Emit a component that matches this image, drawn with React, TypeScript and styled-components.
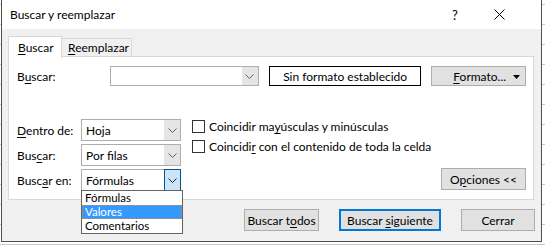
import React from "react";
import styled, { createGlobalStyle, css } from "styled-components";

const FONT = `"Segoe UI", Lato, "Liberation Sans", Arial, sans-serif`;

const GlobalStyle = createGlobalStyle`
  html, body {
    margin: 0;
    padding: 0;
  }
  body {
    width: 545px;
    height: 245px;
    overflow: hidden;
    background-color: #ffffff;
    background-image: linear-gradient(#c8c8c8 1px, transparent 1px);
    background-size: 100% 20px;
    background-position: 0 4px;
    font-family: ${FONT};
    font-size: 12px;
    color: #000;
  }
`;

const Page = styled.div`
  padding-left: 1px;
`;

const Window = styled.div`
  box-sizing: border-box;
  width: 541px;
  height: 242px;
  border: 1px solid #505050;
  border-top: none;
  background: #f0f0f0;
  display: flex;
  flex-direction: column;
`;

const TitleBar = styled.div`
  height: 29px;
  background: #ffffff;
  display: flex;
  align-items: center;
  padding-left: 8px;
  padding-right: 20px;
`;

const Title = styled.div`
  flex: 1;
  font-size: 12px;
  margin-top: -1px;
`;

const CaptionButton = styled.div`
  width: 44px;
  height: 29px;
  display: flex;
  align-items: center;
  justify-content: center;
  font-size: 13px;
`;

const Body = styled.div`
  flex: 1;
  display: flex;
  flex-direction: column;
  padding: 7px 7px 0 6px;
`;

const TabRow = styled.div`
  display: flex;
  align-items: flex-end;
  height: 21px;
  margin-bottom: -1px;
  position: relative;
  z-index: 1;
`;

const Tab = styled.div<{ $active?: boolean }>`
  box-sizing: border-box;
  display: flex;
  align-items: center;
  border: 1px solid #d9d9d9;
  border-bottom: none;
  ${({ $active }) =>
    $active
      ? css`
          width: 54px;
          height: 22px;
          background: #ffffff;
          padding-left: 9px;
          margin-bottom: -1px;
        `
      : css`
          width: 70px;
          height: 19px;
          background: #f0f0f0;
          border-left: none;
          padding: 0 0 1px 6px;
          border-bottom: 1px solid #d9d9d9;
        `}
`;

const Panel = styled.div`
  box-sizing: border-box;
  height: 144px;
  border: 1px solid #d9d9d9;
  background: #ffffff;
  padding: 9px 7px 0 8px;
  display: flex;
  flex-direction: column;
`;

const FindRow = styled.div`
  display: flex;
  align-items: center;
  height: 20px;
`;

const FindLabel = styled.div`
  width: 93px;
`;

const Mn = styled.u`
  text-underline-offset: 2px;
`;

const Combo = styled.div<{ $width: number; $height: number }>`
  position: relative;
  box-sizing: border-box;
  width: ${({ $width }) => $width}px;
  height: ${({ $height }) => $height}px;
  border: 1px solid #adadad;
  background: #ffffff;
  display: flex;
  align-items: center;
  padding-left: 4px;
`;

const ComboText = styled.span`
  flex: 1;
`;

const ComboButton = styled.div<{ $focused?: boolean }>`
  box-sizing: border-box;
  align-self: stretch;
  width: 16px;
  display: flex;
  align-items: center;
  justify-content: center;
  background: #e5e5e5;
  ${({ $focused }) =>
    $focused &&
    css`
      background: #cce4f7;
      border: 1px solid #005499;
      margin: -1px -1px -1px 0;
      width: 17px;
    `}
`;

const FormatBox = styled.div`
  box-sizing: border-box;
  width: 153px;
  height: 20px;
  margin-left: 10px;
  border: 1px solid #000;
  display: flex;
  align-items: center;
  justify-content: center;
`;

const Button = styled.div<{ $width: number; $default?: boolean }>`
  box-sizing: border-box;
  width: ${({ $width }) => $width}px;
  height: 22px;
  background: #e1e1e1;
  border: 1px solid #adadad;
  display: flex;
  align-items: center;
  justify-content: center;
  ${({ $default }) =>
    $default &&
    css`
      border: 2px solid #0078d7;
    `}
`;

const FormatButton = styled(Button)`
  height: 20px;
  margin-left: 10px;
  justify-content: flex-start;
  padding-left: 21px;
  position: relative;
`;

const Caret = styled.svg`
  position: absolute;
  right: 5px;
  top: 8px;
`;

const Options = styled.div`
  margin-top: 33px;
  display: grid;
  grid-template-columns: 64px 100px 1fr auto;
  grid-template-rows: 22px 22px 22px;
  row-gap: 3px;
`;

const OptLabel = styled.div<{ $row: number }>`
  grid-column: 1;
  grid-row: ${({ $row }) => $row};
  display: flex;
  align-items: center;
`;

const OptCombo = styled(Combo)<{ $row: number }>`
  grid-column: 2;
  grid-row: ${({ $row }) => $row};
`;

const ChecksColumn = styled.div`
  grid-column: 3;
  grid-row: 1 / span 2;
  display: flex;
  flex-direction: column;
  gap: 7px;
  padding: 1px 0 0 11px;
`;

const CheckRow = styled.div`
  display: flex;
  align-items: center;
  gap: 4px;
  height: 13px;
`;

const CheckBox = styled.div`
  box-sizing: border-box;
  width: 13px;
  height: 13px;
  border: 1px solid #333333;
  background: #ffffff;
`;

const OptionsButton = styled(Button)`
  grid-column: 4;
  grid-row: 3;
  margin-top: -1px;
`;

const DropList = styled.div`
  position: absolute;
  top: 100%;
  left: -1px;
  width: 102px;
  box-sizing: border-box;
  border: 1px solid #646464;
  background: #ffffff;
  z-index: 2;
`;

const DropItem = styled.div<{ $selected?: boolean }>`
  box-sizing: border-box;
  height: 14px;
  line-height: 14px;
  font-size: 11.5px;
  padding-left: 3px;
  ${({ $selected }) =>
    $selected &&
    css`
      background: #3399ff;
      color: #ffffff;
      outline: 1px dotted #d08a3c;
      outline-offset: -1px;
    `}
`;

const Footer = styled.div`
  display: flex;
  justify-content: flex-end;
  gap: 20px;
  margin-top: 9px;
  margin-right: -1px;
`;

const Chevron = ({ color = "#606060" }: { color?: string }) => (
  <svg width="9" height="5" viewBox="0 0 9 5">
    <polyline points="0.5,0.5 4.5,4.5 8.5,0.5" fill="none" stroke={color} strokeWidth="1" />
  </svg>
);

const App = () => {
  const buscarEnItems = ["Fórmulas", "Valores", "Comentarios"];

  return (
    <>
      <GlobalStyle />
      <Page>
        <Window>
          <TitleBar>
            <Title>Buscar y reemplazar</Title>
            <CaptionButton>?</CaptionButton>
            <CaptionButton>
              <svg width="11" height="11" viewBox="0 0 11 11">
                <path d="M0.5 0.5 L10.5 10.5 M10.5 0.5 L0.5 10.5" stroke="#000" strokeWidth="1" />
              </svg>
            </CaptionButton>
          </TitleBar>

          <Body>
            <TabRow>
              <Tab $active>
                <span>
                  <Mn>B</Mn>uscar
                </span>
              </Tab>
              <Tab>
                <span>
                  <Mn>R</Mn>eemplazar
                </span>
              </Tab>
            </TabRow>

            <Panel>
              <FindRow>
                <FindLabel>
                  B<Mn>u</Mn>scar:
                </FindLabel>
                <Combo $width={150} $height={20}>
                  <ComboText />
                  <ComboButton>
                    <Chevron />
                  </ComboButton>
                </Combo>
                <FormatBox>Sin formato establecido</FormatBox>
                <FormatButton $width={95}>
                  <span>
                    <Mn>F</Mn>ormato...
                  </span>
                  <Caret width="7" height="4" viewBox="0 0 7 4">
                    <polygon points="0,0 7,0 3.5,4" fill="#000" />
                  </Caret>
                </FormatButton>
              </FindRow>

              <Options>
                <OptLabel $row={1}>
                  <span>
                    <Mn>D</Mn>entro de:
                  </span>
                </OptLabel>
                <OptCombo $row={1} $width={100} $height={22}>
                  <ComboText>Hoja</ComboText>
                  <ComboButton>
                    <Chevron />
                  </ComboButton>
                </OptCombo>

                <OptLabel $row={2}>
                  <span>
                    Bus<Mn>c</Mn>ar:
                  </span>
                </OptLabel>
                <OptCombo $row={2} $width={100} $height={22}>
                  <ComboText>Por filas</ComboText>
                  <ComboButton>
                    <Chevron />
                  </ComboButton>
                </OptCombo>

                <OptLabel $row={3}>
                  <span>
                    Busc<Mn>a</Mn>r en:
                  </span>
                </OptLabel>
                <OptCombo $row={3} $width={100} $height={22}>
                  <ComboText>Fórmulas</ComboText>
                  <ComboButton $focused>
                    <Chevron color="#202020" />
                  </ComboButton>
                  <DropList>
                    {buscarEnItems.map((item) => (
                      <DropItem key={item} $selected={item === "Valores"}>
                        {item}
                      </DropItem>
                    ))}
                  </DropList>
                </OptCombo>

                <ChecksColumn>
                  <CheckRow>
                    <CheckBox />
                    <span>
                      Coincidir ma<Mn>y</Mn>úsculas y minúsculas
                    </span>
                  </CheckRow>
                  <CheckRow>
                    <CheckBox />
                    <span>
                      Coincidi<Mn>r</Mn> con el contenido de toda la celda
                    </span>
                  </CheckRow>
                </ChecksColumn>

                <OptionsButton $width={85}>
                  <span>
                    O<Mn>p</Mn>ciones &lt;&lt;
                  </span>
                </OptionsButton>
              </Options>
            </Panel>

            <Footer>
              <Button $width={75}>
                <span>
                  Buscar t<Mn>o</Mn>dos
                </span>
              </Button>
              <Button $width={102} $default>
                <span>
                  Buscar <Mn>s</Mn>iguiente
                </span>
              </Button>
              <Button $width={74}>Cerrar</Button>
            </Footer>
          </Body>
        </Window>
      </Page>
    </>
  );
};

export default App;
